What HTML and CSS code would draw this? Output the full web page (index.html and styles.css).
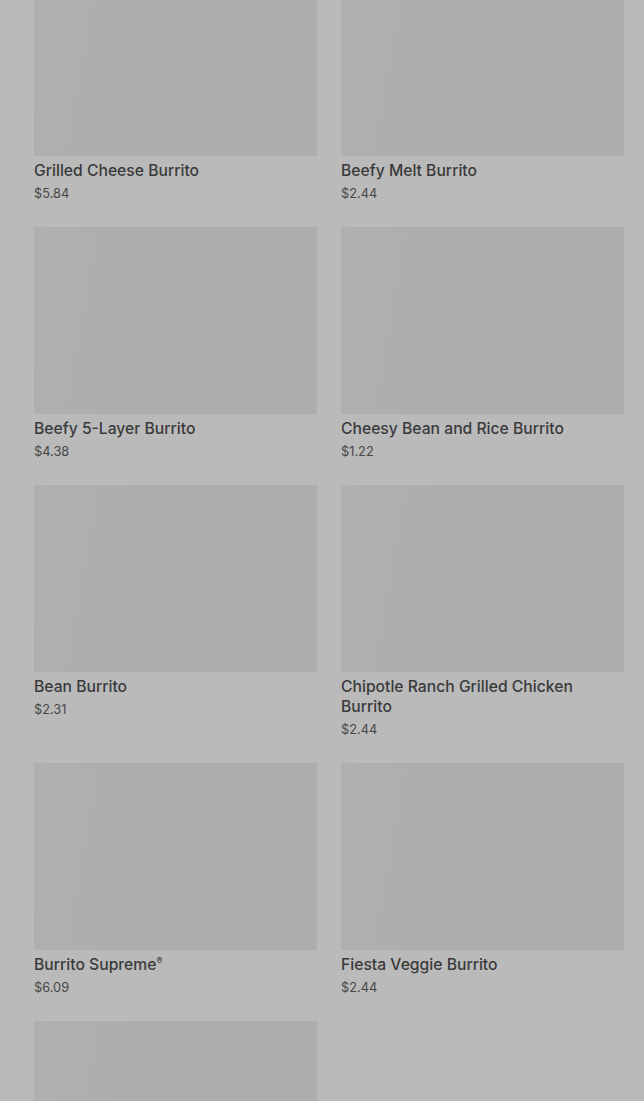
FILE: index.html
```html
<!DOCTYPE html>
<html lang="en">
<head>
    <meta charset="UTF-8">
    <meta name="viewport" content="width=device-width, initial-scale=1.0">
    <title>Burritos</title>
    <link rel="stylesheet" href="styles.css">
</head>
<body>
    <div class="menu-grid">
        <div class="menu-item">
            <div class="item-image"></div>
            <div class="item-name">Grilled Cheese Burrito</div>
            <div class="item-price">$5.84</div>
        </div>
        <div class="menu-item">
            <div class="item-image"></div>
            <div class="item-name">Beefy Melt Burrito</div>
            <div class="item-price">$2.44</div>
        </div>
        <div class="menu-item">
            <div class="item-image"></div>
            <div class="item-name">Beefy 5-Layer Burrito</div>
            <div class="item-price">$4.38</div>
        </div>
        <div class="menu-item">
            <div class="item-image"></div>
            <div class="item-name">Cheesy Bean and Rice Burrito</div>
            <div class="item-price">$1.22</div>
        </div>
        <div class="menu-item">
            <div class="item-image"></div>
            <div class="item-name">Bean Burrito</div>
            <div class="item-price">$2.31</div>
        </div>
        <div class="menu-item">
            <div class="item-image"></div>
            <div class="item-name">Chipotle Ranch Grilled Chicken Burrito</div>
            <div class="item-price">$2.44</div>
        </div>
        <div class="menu-item">
            <div class="item-image"></div>
            <div class="item-name">Burrito Supreme<sup>®</sup></div>
            <div class="item-price">$6.09</div>
        </div>
        <div class="menu-item">
            <div class="item-image"></div>
            <div class="item-name">Fiesta Veggie Burrito</div>
            <div class="item-price">$2.44</div>
        </div>
        <div class="menu-item">
            <div class="item-image"></div>
        </div>
    </div>
</body>
</html>
```

FILE: styles.css
```css
body {
    margin: 0;
    background-color: #bababa;
    color: #373737;
    font-family: Inter, Roboto, "Liberation Sans", sans-serif;
    overflow: hidden;
    height: 1101px;
}
.menu-grid {
    display: grid;
    grid-template-columns: 283px 283px;
    column-gap: 24px;
    row-gap: 24px;
    padding: 0 20px 0 34px;
    margin-top: -31px;
    align-items: start;
}
.item-image {
    height: 187px;
    background: linear-gradient(100deg, #b0b0b0 0%, #adadad 35%, #adadad 100%);
}
.item-name {
    margin-top: 5px;
    font-size: 15.7px;
    font-weight: 500;
    line-height: 20px;
    color: #3a3a3a;
}
.item-name sup {
    font-size: 9px;
    line-height: 0;
    vertical-align: 6px;
}
.item-price {
    margin-top: 4px;
    font-size: 12.8px;
    line-height: 18px;
    color: #474747;
}
```
